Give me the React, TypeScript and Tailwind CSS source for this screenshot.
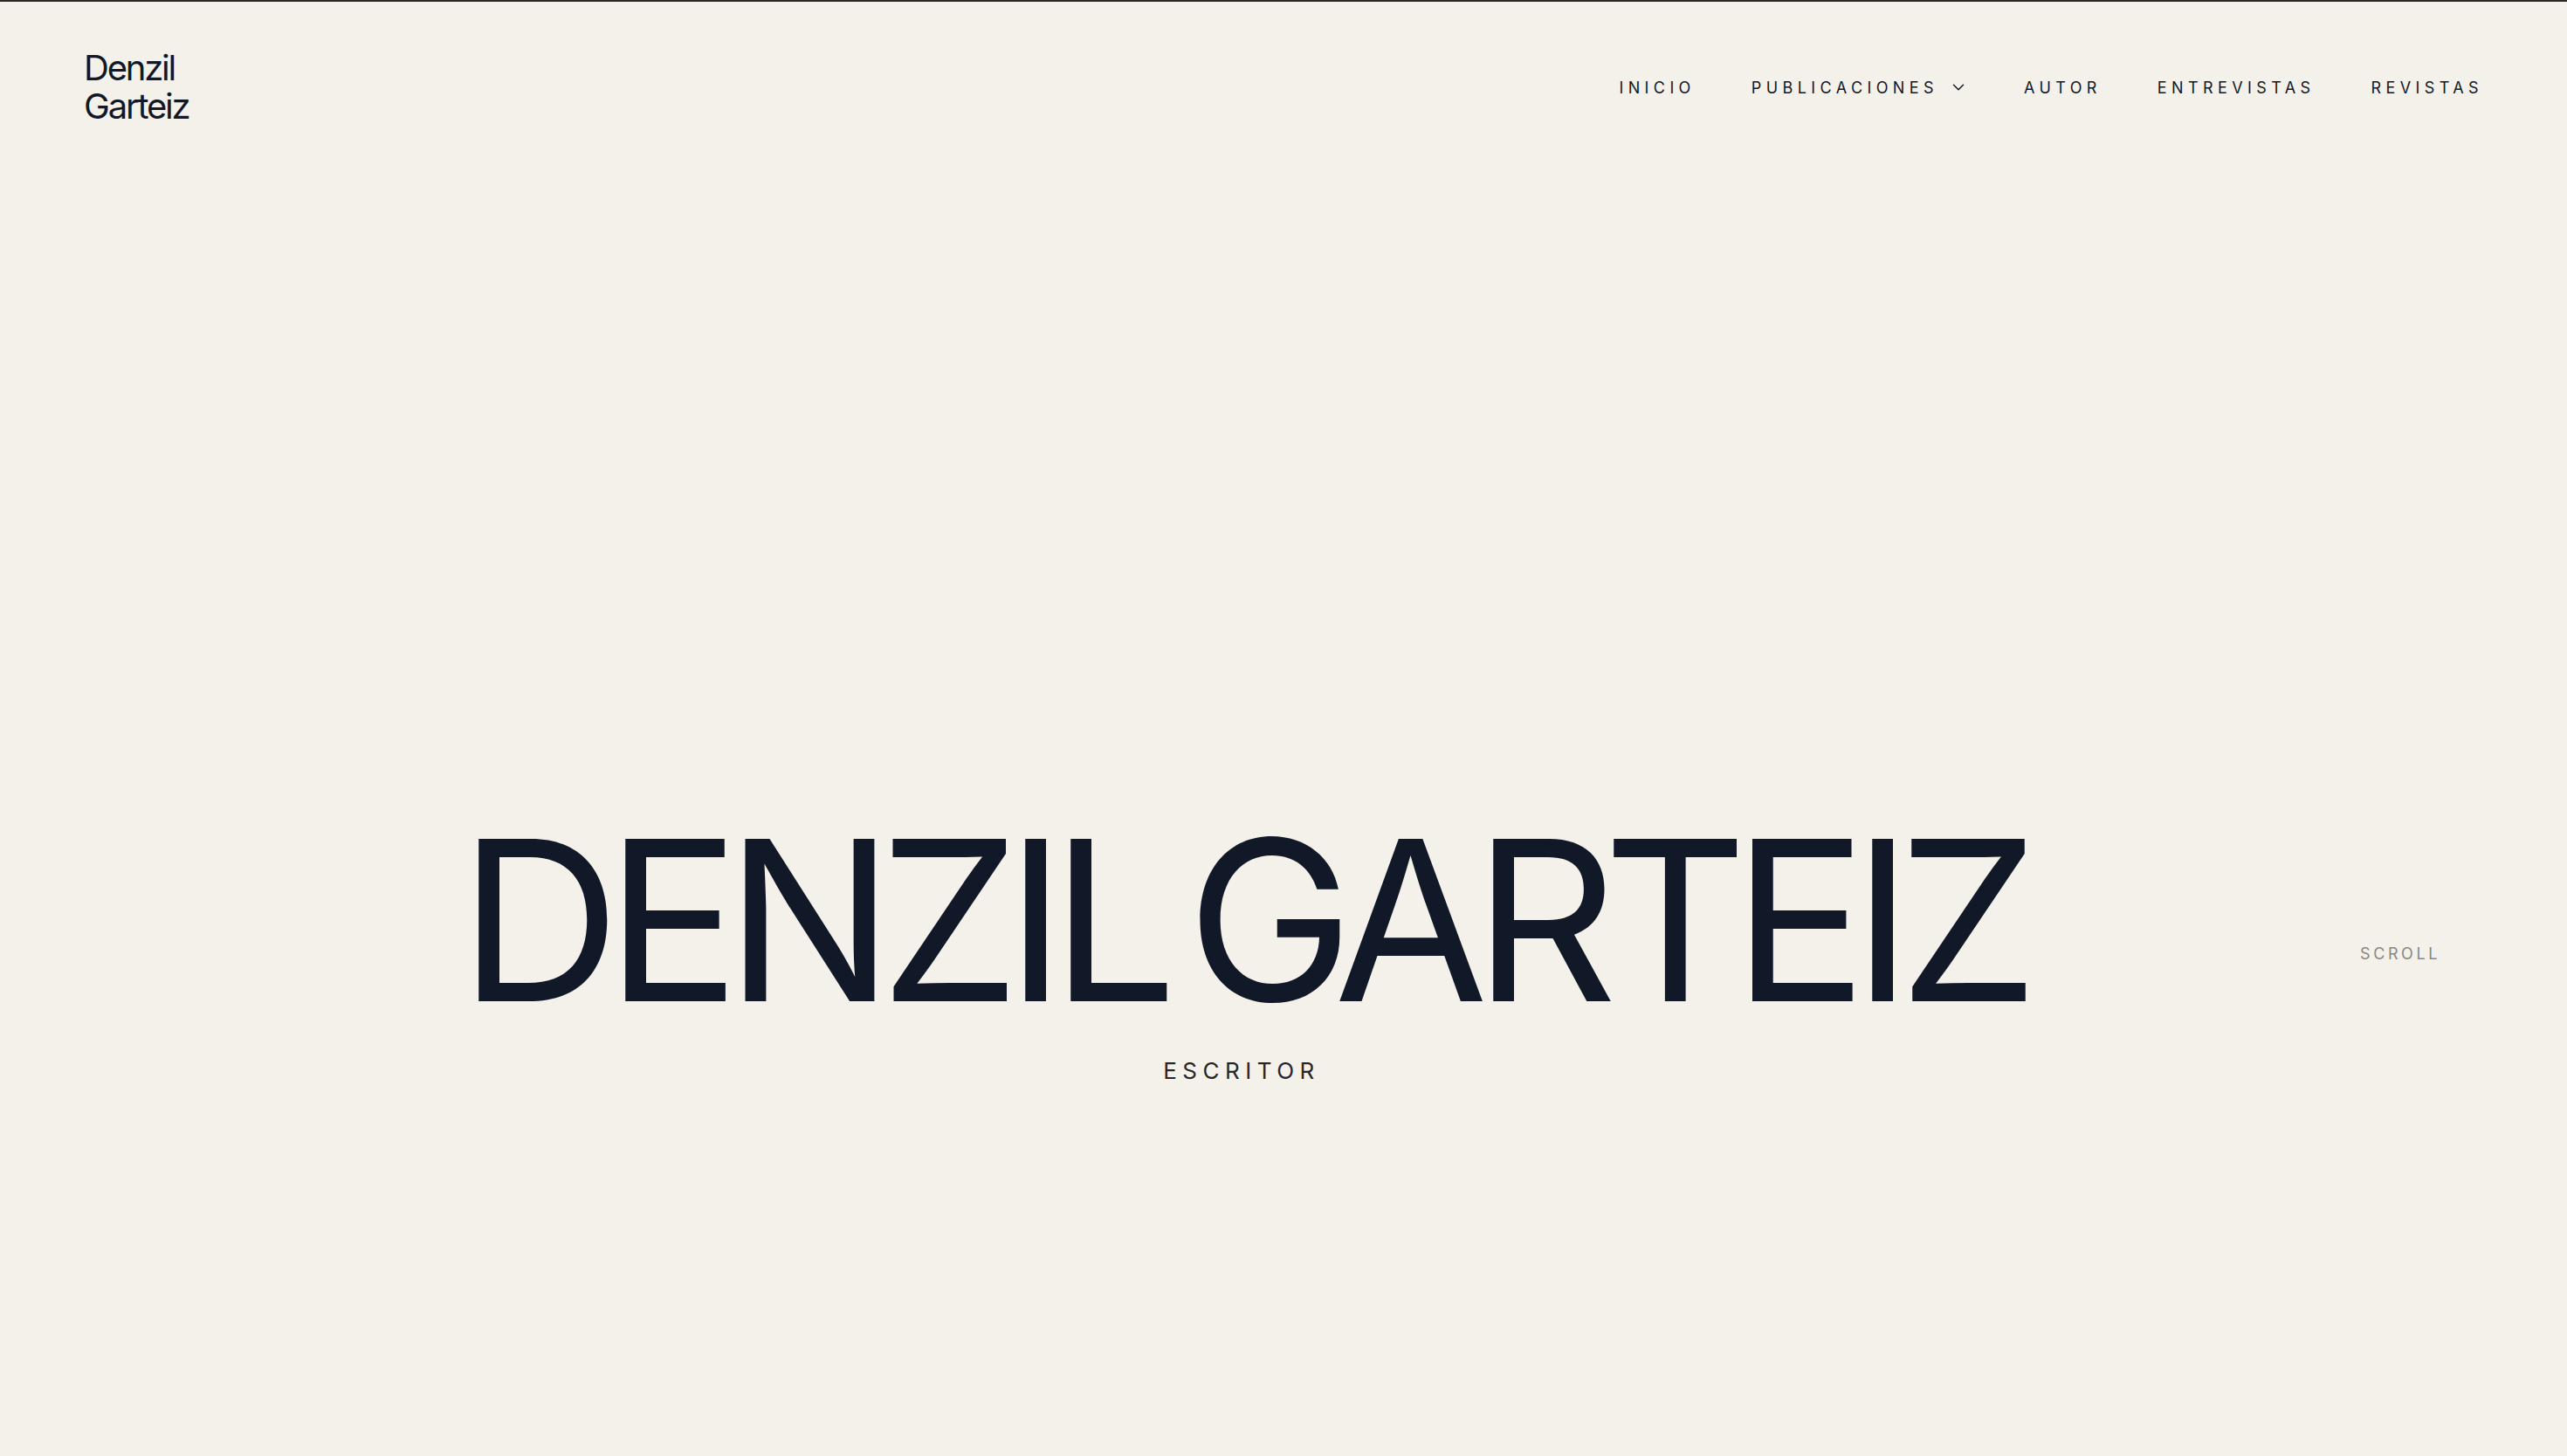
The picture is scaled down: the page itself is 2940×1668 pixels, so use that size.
import React from "react";
import { ChevronDown } from "lucide-react";

export default function App() {
  const nav = ["INICIO", "PUBLICACIONES", "AUTOR", "ENTREVISTAS", "REVISTAS"];
  return (
    <div
      className="h-[1668px] w-full flex flex-col bg-[#f4f1ea] border-t-2 border-[#2a2626] overflow-hidden"
      style={{ fontFamily: "Inter, 'Noto Sans', sans-serif" }}
    >
      <header className="flex items-center justify-between px-24 pt-[54px]">
        <div className="text-[40px] leading-[44px] text-[#111827] tracking-[-0.055em]">
          <div>Denzil</div>
          <div>Garteiz</div>
        </div>
        <nav className="flex items-center gap-[64px] text-[18px] tracking-[0.3em] text-[#111827]">
          {nav.map((n) => (
            <div key={n} className="flex items-center">
              <span>{n}</span>
              {n === "PUBLICACIONES" && (
                <ChevronDown size={22} strokeWidth={1.6} className="ml-3" />
              )}
            </div>
          ))}
        </nav>
      </header>
      <section className="relative flex-1 flex flex-col items-center pt-[782px] pr-[96px]">
        <h1 className="text-[256px] leading-none tracking-[-0.065em] [word-spacing:-28px] text-[#111827] whitespace-nowrap">
          DENZIL GARTEIZ
        </h1>
        <p className="mt-[27px] text-[26px] leading-[36px] tracking-[0.25em] text-[#27262b]">
          ESCRITOR
        </p>
        <div className="absolute right-[145px] top-[935px] text-[18px] leading-[28px] tracking-[0.2em] text-[#8a8784]">
          SCROLL
        </div>
      </section>
    </div>
  );
}
